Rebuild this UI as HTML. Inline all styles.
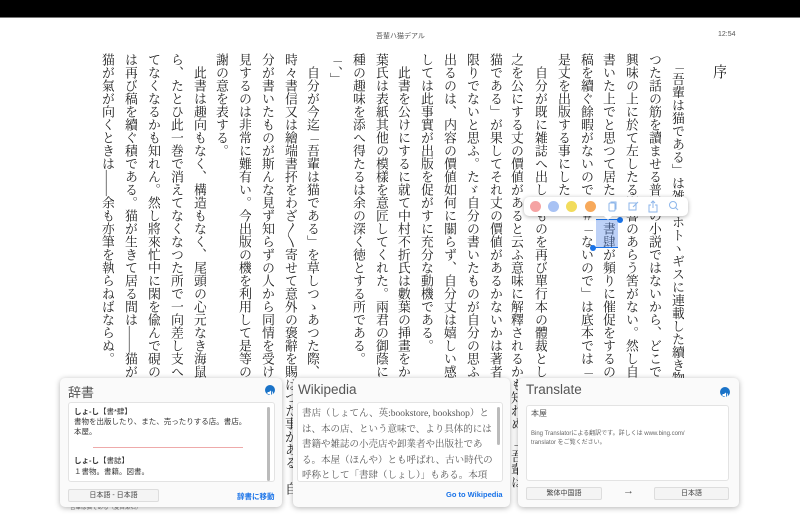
<!DOCTYPE html>
<html><head><meta charset="utf-8">
<style>
*{margin:0;padding:0;box-sizing:border-box}
body{width:800px;height:520px;overflow:hidden;background:#fff;position:relative;font-family:"Liberation Sans","Noto Sans CJK JP",sans-serif}
.bar{position:absolute;left:0;top:0;width:800px;height:18px;background:#000;border-bottom:1px solid #777}
.hd{position:absolute;top:31px;font-size:7px;color:#555}
.col{position:absolute;top:53px;width:14px;height:450px;writing-mode:vertical-rl;white-space:nowrap;overflow:hidden;font-family:"Liberation Serif","Noto Serif CJK JP","Noto Serif CJK SC",serif;font-size:13px;letter-spacing:0;color:#222;line-height:14px}
.sel{position:absolute;left:596px;top:220px;width:22px;height:27px;background:rgba(90,140,235,.4)}
.tb{position:absolute;left:524px;top:197px;width:164px;height:19px;background:#fff;border-radius:5px;box-shadow:0 1px 5px rgba(0,0,0,.3)}
.dot{position:absolute;top:4px;width:11px;height:11px;border-radius:50%}
.pn{position:absolute;top:378px;height:129px;background:#fafafa;border-radius:5px;box-shadow:0 1px 6px rgba(0,0,0,.3)}
.tt{position:absolute;left:8px;top:4px;font-size:13px;color:#555}
.box{position:absolute;background:#fff;border:1px solid #e3e3e3;border-radius:3px}
.spk{position:absolute;width:10px;height:10px;border-radius:50%;background:#1a73c8}
.btn{position:absolute;height:13px;background:#f4f4f4;border:1px solid #ddd;border-radius:2px;font-size:7px;color:#444;text-align:center;line-height:11px}
.lnk{position:absolute;font-size:7.5px;color:#1a73e8;font-weight:bold}
.sb{position:absolute;width:3px;background:#bbb;border-radius:2px}
</style></head><body>
<div class="bar"></div>
<div class="hd" style="left:376px">吾輩ハ猫デアル</div>
<div class="hd" style="left:718px">12:54</div>

<div class="col" style="left:709px;top:64px;font-size:15px;width:17px">序</div>
<div class="col" style="left:670px">　「吾輩は猫である」は雑誌ホトヽギスに連載した續き物である。固より纏</div>
<div class="col" style="left:647px">つた話の筋を讀ませる普通の小説ではないから、どこで切つて一冊としても</div>
<div class="col" style="left:624px">興味の上に於て左したる影響のあらう筈がない。然し自分の考ではもう少し</div>
<div class="col" style="left:601px">書いた上でと思つて居たが、書肆が頻りに催促をするのと、多忙で意外に</div>
<div class="col" style="left:579px">稿を續ぐ餘暇がないので［＃「ないので」は底本では「ないの」］、差し當り</div>
<div class="col" style="left:556px">是丈を出版する事にした。</div>
<div class="col" style="left:533px">　自分が既に雑誌へ出したものを再び單行本の體裁として公にする以上は、</div>
<div class="col" style="left:509px">之を公にする丈の價値があると云ふ意味に解釋されるかも知れぬ。「吾輩は</div>
<div class="col" style="left:488px">猫である」が果してそれ丈の價値があるかないかは著者の議論すべき</div>
<div class="col" style="left:465px">限りでないと思ふ。たゞ自分の書いたものが自分の思ふ樣な體裁で世の中へ</div>
<div class="col" style="left:442px">出るのは、内容の價値如何に關らず、自分丈は嬉しい感じがする。自分に對</div>
<div class="col" style="left:419px">しては此事實が出版を促がすに充分な動機である。</div>
<div class="col" style="left:396px">　此書を公けにするに就て中村不折氏は數葉の挿畫をかいてくれた。淺井黙語</div>
<div class="col" style="left:374px">葉氏は表紙其他の模樣を意匠してくれた。兩君の御蔭に［＃「御蔭に」は底本では</div>
<div class="col" style="left:351px">種の趣味を添へ得たるは余の深く徳とする所である。</div>
<div class="col" style="left:328px">「、」</div>
<div class="col" style="left:305px">　自分が今迄「吾輩は猫である」を草しつゝあつた際、知らぬ人から</div>
<div class="col" style="left:283px">時々書信又は繪端書抔をわざ〳〵寄せて意外の褒辭を賜はつた事がある。自</div>
<div class="col" style="left:260px">分が書いたものが斯んな見ず知らずの人から同情を受けて居ると云ふ事を發</div>
<div class="col" style="left:237px">見するのは非常に難有い。今出版の機を利用して是等の諸君に向つて一言感</div>
<div class="col" style="left:214px">謝の意を表する。</div>
<div class="col" style="left:192px">　此書は趣向もなく、構造もなく、尾頭の心元なき海鼠の樣な文章であるか</div>
<div class="col" style="left:169px">ら、たとひ此一巻で消えてなくなつた所で一向差し支へはない。又實際消え</div>
<div class="col" style="left:146px">てなくなるかも知れん。然し將來忙中に閑を偸んで硯の塵を吹く機會があれ</div>
<div class="col" style="left:123px">は再び稿を續ぐ積である。猫が生きて居る間は――猫が丈夫で居る間は――</div>
<div class="col" style="left:100px">猫が氣が向くときは――余も亦筆を執らねばならぬ。</div>

<div class="sel"></div>
<div style="position:absolute;left:596px;top:219px;width:24px;height:1px;background:#1a73e8"></div>
<div style="position:absolute;left:594px;top:247px;width:24px;height:1px;background:#1a73e8"></div>
<div style="position:absolute;left:617px;top:217px;width:6px;height:6px;border-radius:50%;background:#1a73e8"></div>
<div style="position:absolute;left:590px;top:245px;width:6px;height:6px;border-radius:50%;background:#1a73e8"></div>

<div class="tb">
<div class="dot" style="left:6px;background:#f5a3a3"></div>
<div class="dot" style="left:24px;background:#a8c2f4"></div>
<div class="dot" style="left:42px;background:#f2dc5c"></div>
<div class="dot" style="left:61px;background:#f7a95b"></div>
<svg style="position:absolute;left:80px;top:3px" width="90" height="13" viewBox="0 0 90 13" fill="none" stroke="#8db6ea" stroke-width="1">
<rect x="5" y="3" width="6" height="8" rx="1"/><path d="M7 3V2h5v7h-1"/>
<rect x="25" y="3" width="7" height="7"/><path d="M29 7l5-5"/>
<path d="M47 5h-2v7h8V5h-2M49 8V1M47 3l2-2 2 2"/>
<circle cx="69" cy="5" r="3.5"/><path d="M71.5 7.5l2.5 2.5"/>
</svg>
<div style="position:absolute;left:79px;top:18px;width:0;height:0;border-left:5px solid transparent;border-right:5px solid transparent;border-top:5px solid #fff"></div>
</div>

<div style="position:absolute;left:70px;top:503px;font-size:5.5px;color:#777">吾輩は猫である（夏目漱石）</div>
<div style="position:absolute;left:724px;top:503px;font-size:5.5px;color:#777">1/4</div>

<div class="pn" style="left:60px;width:222px">
<div class="tt">辞書</div>
<div class="spk" style="left:205px;top:7px"><svg width="10" height="10" viewBox="0 0 10 10"><path d="M2.5 4h1.5l2-1.5v5L4 6H2.5z" fill="#fff"/><path d="M7 3.5q1 1.5 0 3" stroke="#fff" stroke-width=".8" fill="none"/></svg></div>
<div class="box" style="left:8px;top:24px;width:207px;height:80px">
<div style="position:absolute;left:5px;top:4px;font-size:7.5px;color:#333;line-height:10px"><b>しょ-し</b>【書*肆】<br>書物を出版したり、また、売ったりする店。書店。<br>本屋。</div>
<div style="position:absolute;left:24px;top:44px;width:150px;height:1px;background:#eaa"></div>
<div style="position:absolute;left:5px;top:52px;font-size:7.5px;color:#333;line-height:11px"><b>しょ-し</b>【書誌】<br>１書物。書籍。図書。</div>
<div class="sb" style="left:198px;top:4px;height:74px"></div>
</div>
<div class="btn" style="left:8px;top:111px;width:91px">日本語 - 日本語</div>
<div class="lnk" style="left:177px;top:113px">辞書に移動</div>
</div>

<div class="pn" style="left:293px;width:217px">
<div class="tt" style="left:5px;font-size:13.5px">Wikipedia</div>
<div class="box" style="left:4px;top:24px;width:206px;height:80px;overflow:hidden">
<div style="position:absolute;left:4px;top:4px;font-family:'Liberation Serif','Noto Serif CJK JP',serif;font-size:9.5px;color:#555;line-height:15.5px;white-space:nowrap">書店（しょてん、英:bookstore, bookshop）と<br>は、本の店、という意味で、より具体的には<br>書籍や雑誌の小売店や卸業者や出版社であ<br>る。本屋（ほんや）とも呼ばれ、古い時代の<br>呼称として「書肆（しょし）」もある。本項</div>
<div class="sb" style="left:199px;top:4px;height:38px"></div>
</div>
<div class="lnk" style="left:153px;top:112px">Go to Wikipedia</div>
</div>

<div class="pn" style="left:518px;width:221px">
<div class="tt" style="font-size:13.5px">Translate</div>
<div class="spk" style="left:202px;top:9px"><svg width="10" height="10" viewBox="0 0 10 10"><path d="M2.5 4h1.5l2-1.5v5L4 6H2.5z" fill="#fff"/><path d="M7 3.5q1 1.5 0 3" stroke="#fff" stroke-width=".8" fill="none"/></svg></div>
<div class="box" style="left:8px;top:27px;width:203px;height:76px">
<div style="position:absolute;left:4px;top:2px;font-size:8px;color:#555">本屋</div>
<div style="position:absolute;left:4px;top:24px;font-size:6px;color:#666;line-height:9px">Bing Translatorによる翻訳です。詳しくは www.bing.com/<br>translator をご覧ください。</div>
</div>
<div class="btn" style="left:8px;top:109px;width:76px">繁体中国語</div>
<div style="position:absolute;left:105px;top:107px;font-size:11px;color:#555">→</div>
<div class="btn" style="left:136px;top:109px;width:75px">日本語</div>
</div>
</body></html>
